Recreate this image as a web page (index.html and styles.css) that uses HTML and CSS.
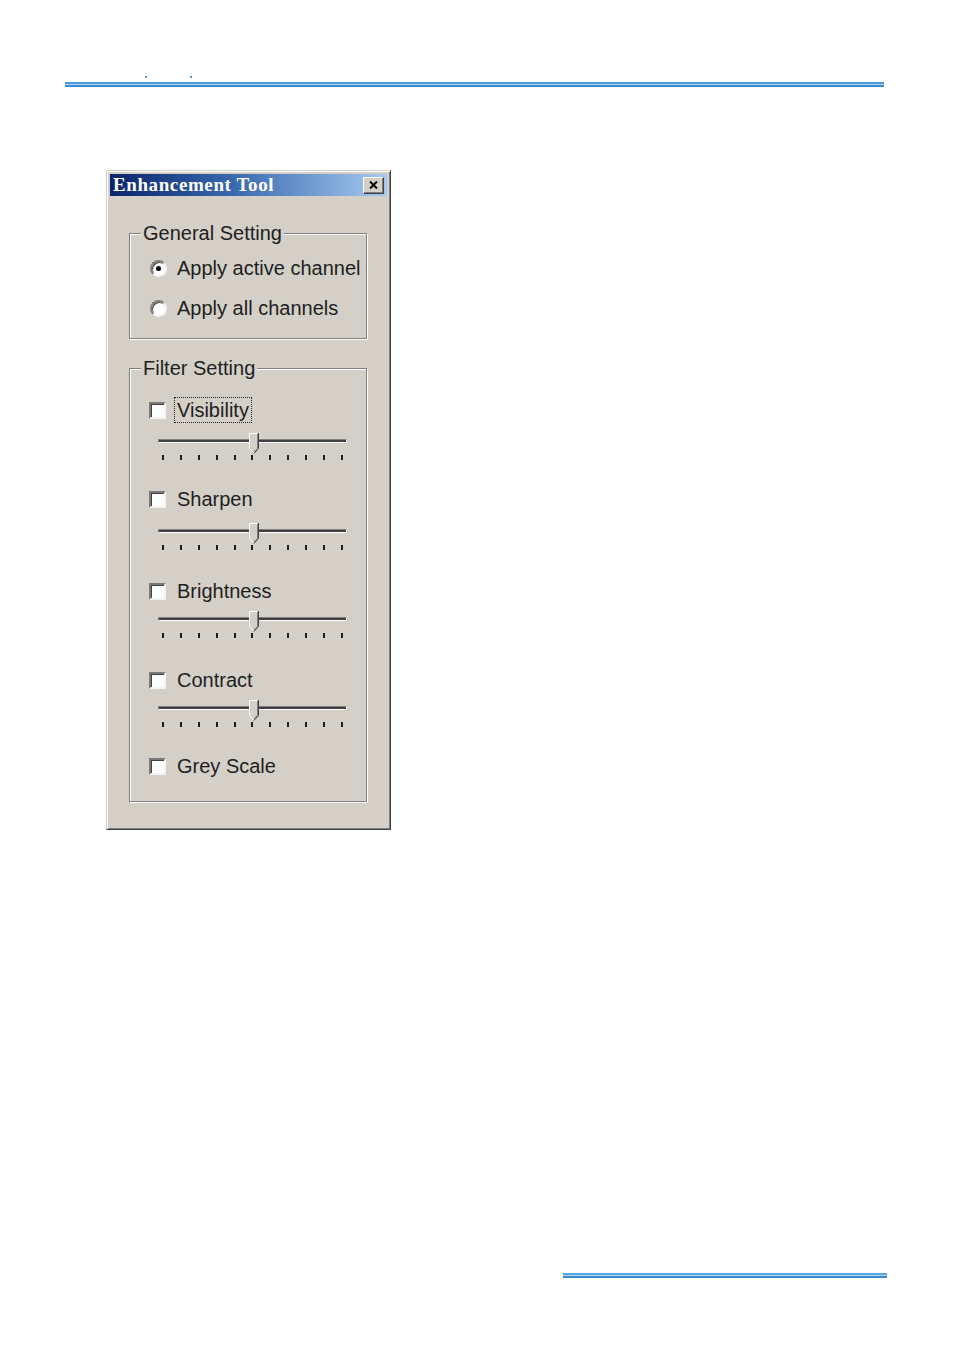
FILE: index.html
```html
<!DOCTYPE html>
<html>
<head>
<meta charset="utf-8">
<link rel="stylesheet" href="styles.css">
</head>
<body>
<div class="page">
  <header class="topbar">
    <div class="marks"><span class="mark m1"></span><span class="mark m2"></span></div>
    <div class="rule"></div>
  </header>

  <div class="window">
    <div class="titlebar">
      <span class="title">Enhancement Tool</span>
      <span class="close">
        <svg width="9" height="8" viewBox="0 0 9 8"><path d="M1 0.5 L8 7.5 M8 0.5 L1 7.5" stroke="#000" stroke-width="2"/></svg>
      </span>
    </div>
    <div class="content">
      <fieldset class="group">
        <legend>General Setting</legend>
        <div class="group-body general">
          <div class="radio-row"><span class="radio checked"></span><span class="label">Apply active channel</span></div>
          <div class="radio-row"><span class="radio"></span><span class="label">Apply all channels</span></div>
        </div>
      </fieldset>

      <fieldset class="group filter">
        <legend>Filter Setting</legend>
        <div class="group-body filters">
          <div class="check-row"><span class="check"></span><span class="label cl focused">Visibility</span></div>
          <div class="slider s1">
            <div class="track"></div>
            <div class="ticks"><i></i><i></i><i></i><i></i><i></i><i></i><i></i><i></i><i></i><i></i><i></i></div>
            <svg class="thumb" width="10" height="21" viewBox="0 0 10 21"><polygon points="0,0 9,0 9,15 4.5,20 0,15" fill="#d4d0c8"/><polyline points="0.5,15.5 0.5,0.5 8.5,0.5" fill="none" stroke="#fff"/><polyline points="9.5,0 9.5,15.5 4.8,20.5" fill="none" stroke="#404040"/><polyline points="8.5,1 8.5,15.2 4.7,19.2" fill="none" stroke="#808080"/><line x1="0.5" y1="15.5" x2="4.5" y2="19.5" stroke="#fff"/></svg>
          </div>

          <div class="check-row"><span class="check"></span><span class="label cl">Sharpen</span></div>
          <div class="slider s2">
            <div class="track"></div>
            <div class="ticks"><i></i><i></i><i></i><i></i><i></i><i></i><i></i><i></i><i></i><i></i><i></i></div>
            <svg class="thumb" width="10" height="21" viewBox="0 0 10 21"><polygon points="0,0 9,0 9,15 4.5,20 0,15" fill="#d4d0c8"/><polyline points="0.5,15.5 0.5,0.5 8.5,0.5" fill="none" stroke="#fff"/><polyline points="9.5,0 9.5,15.5 4.8,20.5" fill="none" stroke="#404040"/><polyline points="8.5,1 8.5,15.2 4.7,19.2" fill="none" stroke="#808080"/><line x1="0.5" y1="15.5" x2="4.5" y2="19.5" stroke="#fff"/></svg>
          </div>

          <div class="check-row"><span class="check"></span><span class="label cl">Brightness</span></div>
          <div class="slider s3">
            <div class="track"></div>
            <div class="ticks"><i></i><i></i><i></i><i></i><i></i><i></i><i></i><i></i><i></i><i></i><i></i></div>
            <svg class="thumb" width="10" height="21" viewBox="0 0 10 21"><polygon points="0,0 9,0 9,15 4.5,20 0,15" fill="#d4d0c8"/><polyline points="0.5,15.5 0.5,0.5 8.5,0.5" fill="none" stroke="#fff"/><polyline points="9.5,0 9.5,15.5 4.8,20.5" fill="none" stroke="#404040"/><polyline points="8.5,1 8.5,15.2 4.7,19.2" fill="none" stroke="#808080"/><line x1="0.5" y1="15.5" x2="4.5" y2="19.5" stroke="#fff"/></svg>
          </div>

          <div class="check-row"><span class="check"></span><span class="label cl">Contract</span></div>
          <div class="slider s4">
            <div class="track"></div>
            <div class="ticks"><i></i><i></i><i></i><i></i><i></i><i></i><i></i><i></i><i></i><i></i><i></i></div>
            <svg class="thumb" width="10" height="21" viewBox="0 0 10 21"><polygon points="0,0 9,0 9,15 4.5,20 0,15" fill="#d4d0c8"/><polyline points="0.5,15.5 0.5,0.5 8.5,0.5" fill="none" stroke="#fff"/><polyline points="9.5,0 9.5,15.5 4.8,20.5" fill="none" stroke="#404040"/><polyline points="8.5,1 8.5,15.2 4.7,19.2" fill="none" stroke="#808080"/><line x1="0.5" y1="15.5" x2="4.5" y2="19.5" stroke="#fff"/></svg>
          </div>

          <div class="check-row"><span class="check"></span><span class="label cl">Grey Scale</span></div>
        </div>
      </fieldset>
    </div>
  </div>

  <footer class="bottombar">
    <div class="rule"></div>
  </footer>
</div>
</body>
</html>
```

FILE: styles.css
```css
html, body {
  margin: 0;
  padding: 0;
  background: #fff;
}

.page {
  width: 954px;
  height: 1356px;
  overflow: hidden;
  font-family: "Liberation Sans", Arial, sans-serif;
}

.topbar {
  padding-top: 76px;
  margin-left: 65px;
  width: 819px;
}

.marks {
  height: 2px;
  display: flex;
}

.mark {
  width: 2px;
  height: 2px;
  background: #4a98dc;
}

.m1 { margin-left: 80px; }
.m2 { margin-left: 43px; }

.rule {
  margin-top: 4px;
  height: 1px;
  border-top: 2px solid #4b9be0;
  border-bottom: 2px solid #3a8ad4;
  background: #b4d4f0;
}

.window {
  margin-top: 83px;
  margin-left: 106px;
  width: 285px;
  height: 660px;
  box-sizing: border-box;
  background: #d4d0c8;
  border: 1px solid;
  border-color: #d4d0c8 #404040 #404040 #d4d0c8;
  box-shadow: inset 1px 1px 0 #fff, inset -1px -1px 0 #808080;
  padding: 3px;
}

.titlebar {
  height: 22px;
  display: flex;
  align-items: center;
  justify-content: space-between;
  padding: 0 3px 0 3px;
  background: linear-gradient(to right, #0a246a 0%, #3a6ab0 45%, #a6caf0 100%);
}

.title {
  font-family: "Liberation Serif", "Times New Roman", serif;
  font-weight: bold;
  font-size: 19px;
  line-height: 22px;
  letter-spacing: 0.6px;
  color: #fff;
}

.close {
  width: 19px;
  height: 15px;
  background: #d4d0c8;
  border: 1px solid;
  border-color: #fff #404040 #404040 #fff;
  box-shadow: inset -1px -1px 0 #808080;
  display: flex;
  align-items: center;
  justify-content: center;
}

.close svg { display: block; }

.content {
  padding: 26px 20px 0 19px;
}

.group {
  margin: 0;
  padding: 0;
  min-width: 0;
  border: 1px solid #808080;
  box-shadow: 1px 1px 0 #fff, inset 1px 1px 0 #fff;
}

.group legend {
  margin-left: 11px;
  padding: 0 2px;
  font-size: 20px;
  line-height: 22px;
  color: #1e1e1e;
  background: #d4d0c8;
}

.filter {
  margin-top: 18px;
}

.group-body.general {
  padding: 4px 0 10px 20px;
}

.group-body.filters {
  padding: 18px 0 22px 19px;
}

.radio-row {
  height: 40px;
  display: flex;
  align-items: center;
  gap: 10px;
}

.label {
  font-size: 20px;
  color: #1e1e1e;
  white-space: nowrap;
}

.radio {
  width: 13px;
  height: 13px;
  border-radius: 50%;
  background: #fff;
  border: 2px solid;
  border-color: #808080 #f4f4f4 #f4f4f4 #808080;
  box-shadow: inset 1px 1px 0 #404040;
  display: flex;
  align-items: center;
  justify-content: center;
  flex: none;
}

.radio.checked::after {
  content: "";
  width: 5px;
  height: 5px;
  border-radius: 50%;
  background: #000;
}

.check-row {
  height: 26px;
  display: flex;
  align-items: center;
  gap: 8px;
}

.check {
  width: 13px;
  height: 13px;
  background: #fff;
  border: 2px solid;
  border-color: #7a7a7a #f4f4f4 #f4f4f4 #7a7a7a;
  box-shadow: inset 1px 1px 0 #404040;
  flex: none;
}

.cl {
  line-height: 24px;
  padding: 0 2px;
  border: 1px dotted transparent;
}

.cl.focused {
  border-color: #222;
}

.slider {
  position: relative;
  margin-left: 9px;
  width: 189px;
  box-sizing: border-box;
}

.s1 { height: 63px; padding-top: 16px; }
.s2 { height: 66px; padding-top: 17px; }
.s3 { height: 63px; padding-top: 13px; }
.s4 { height: 60px; padding-top: 13px; }

.track {
  height: 2px;
  border: 1px solid;
  border-color: #808080 #fff #fff #808080;
  background: #404040;
}

.ticks {
  margin-top: 12px;
  height: 5px;
  display: flex;
  justify-content: space-between;
  padding: 0 4px 0 4px;
}

.ticks i {
  display: block;
  width: 2px;
  height: 5px;
  background: #202020;
}

.thumb {
  position: absolute;
  left: 91px;
  top: -6px;
  margin-top: 0;
  display: block;
}

.s1 .thumb { top: 10px; }
.s2 .thumb { top: 11px; }
.s3 .thumb { top: 7px; }
.s4 .thumb { top: 7px; }

.bottombar {
  margin-top: 443px;
  margin-left: 563px;
  width: 324px;
}

.bottombar .rule {
  margin-top: 0;
  border-top-color: #5aa4e0;
  border-bottom-color: #3a8ad4;
}
```
